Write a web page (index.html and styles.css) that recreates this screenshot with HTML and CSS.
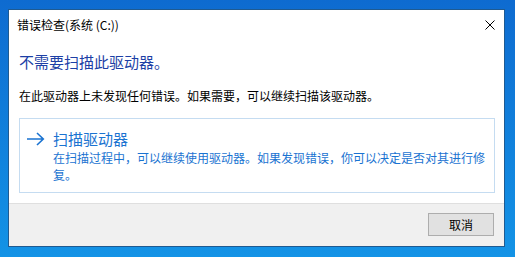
FILE: index.html
```html
<!DOCTYPE html>
<html lang="zh-CN">
<head>
    <meta charset="UTF-8">
    <title>错误检查</title>
    <link rel="stylesheet" href="styles.css">
</head>
<body>
    <!-- 对话框窗口 -->
    <div class="window">
        <!-- 标题栏 -->
        <div class="titlebar">
            <span class="title">错误检查(系统 (C:))</span>
            <svg class="close" width="10" height="10" viewBox="0 0 10 10">
                <path d="M0.5 0.5 L9.5 9.5 M9.5 0.5 L0.5 9.5" stroke="#000" stroke-width="1" fill="none"/>
            </svg>
        </div>

        <!-- 内容区 -->
        <div class="content">
            <div class="heading">不需要扫描此驱动器。</div>
            <div class="message">在此驱动器上未发现任何错误。如果需要，可以继续扫描该驱动器。</div>

            <div class="command">
                <svg class="arrow" width="18" height="14" viewBox="0 0 18 14">
                    <path d="M0 7 H16 M10 1 L16.3 7 L10 13" stroke="#1a73d1" stroke-width="1.6" fill="none"/>
                </svg>
                <div class="command-text">
                    <div class="command-title">扫描驱动器</div>
                    <div class="command-desc">在扫描过程中，可以继续使用驱动器。如果发现错误，你可以决定是否对其进行修复。</div>
                </div>
            </div>
        </div>

        <!-- 底部按钮区 -->
        <div class="footer">
            <button class="btn">取消</button>
        </div>
    </div>
</body>
</html>
```

FILE: styles.css
```css
*{
    margin: 0;
    padding: 0;
    box-sizing: border-box;
}

body{
    width: 515px;
    height: 257px;
    overflow: hidden;
    background: linear-gradient(to bottom, #0e6bd0, #1393e6);
    font-family: "Noto Sans CJK SC", "Microsoft YaHei", sans-serif;
    font-size: 12px;
    color: #000;
}

/* 窗口 */
.window{
    width: 497px;
    height: 238px;
    margin: 9px 0 0 8px;
    border: 1px solid #1f5a91;
    background-color: #fff;
    display: flex;
    flex-direction: column;
}

.titlebar{
    height: 30px;
    padding-left: 8px;
    padding-right: 9px;
    display: flex;
    align-items: center;
    justify-content: space-between;
}

.title{
    line-height: 16px;
}

.content{
    flex: 1;
    padding: 12px 9px 0 10px;
}

.heading{
    font-size: 15px;
    line-height: 20px;
    color: #1c3fa6;
}

.message{
    margin-top: 15px;
    line-height: 18px;
}

/* 命令链接 */
.command{
    margin-top: 13px;
    border: 1px solid #c5dcf1;
    padding: 10px 8px 9px 7px;
    display: flex;
    align-items: flex-start;
}

.arrow{
    margin-top: 3px;
    margin-right: 8px;
    flex-shrink: 0;
}

.command-text{
    color: #1a73d1;
}

.command-title{
    font-size: 15px;
    line-height: 20px;
}

.command-desc{
    width: 436px;
    line-height: 17px;
}

/* 底部 */
.footer{
    height: 43px;
    border-top: 1px solid #dfdfdf;
    background-color: #f0f0f0;
    display: flex;
    justify-content: flex-end;
    align-items: flex-start;
    padding: 9px 10px 0 0;
}

.btn{
    width: 66px;
    height: 23px;
    border: 1px solid #adadad;
    background-color: #e1e1e1;
    font-family: inherit;
    font-size: 12px;
    color: #000;
}
```
